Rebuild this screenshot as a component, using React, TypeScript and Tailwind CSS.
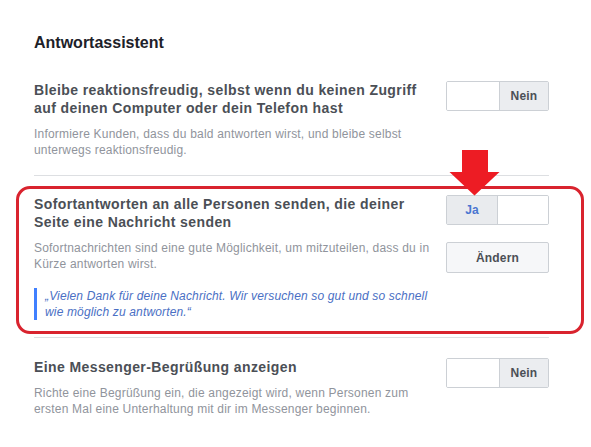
import React from "react";

const font = { fontFamily: '"Liberation Sans", Arial, Helvetica, sans-serif' };

function Toggle({ on }: { on: boolean }) {
  return (
    <div className="flex h-[30px] w-[103px] rounded-[2px] border border-[#ccd0d5] bg-white overflow-hidden">
      {on ? (
        <>
          <div className="flex w-[50px] items-center justify-center bg-[#e9ebee] text-[12px] font-bold text-[#4a76d1] tracking-[0.2px]">
            Ja
          </div>
          <div className="flex-1 border-l border-[#ccd0d5] bg-white" />
        </>
      ) : (
        <>
          <div className="w-[52px] bg-white" />
          <div className="flex flex-1 items-center justify-center border-l border-[#ccd0d5] bg-[#ebedf0] text-[12px] font-bold text-[#4b4f56] tracking-[0.2px]">
            Nein
          </div>
        </>
      )}
    </div>
  );
}

function Heading({ children }: { children: React.ReactNode }) {
  return (
    <div className="text-[14px] font-bold leading-[18px] tracking-[0.4px] text-[#4b4f56]">
      {children}
    </div>
  );
}

function Desc({ children }: { children: React.ReactNode }) {
  return (
    <div className="mt-[9px] text-[12px] leading-[16px] tracking-[0.2px] text-[#90949c]">
      {children}
    </div>
  );
}

export default function App() {
  return (
    <div className="relative h-[447px] w-[591px] overflow-hidden bg-white" style={font}>
      <div className="ml-[34px] w-[515px] pt-[33px]">
        <div className="text-[16px] font-bold leading-[20px] text-[#1d2129]">
          Antwortassistent
        </div>

        {/* Section 1 */}
        <div className="mt-[28px] flex items-start justify-between border-b border-[#dddfe2] pb-[17px]">
          <div className="w-[400px]">
            <Heading>
              Bleibe reaktionsfreudig, selbst wenn du keinen Zugriff
              <br />
              auf deinen Computer oder dein Telefon hast
            </Heading>
            <Desc>
              Informiere Kunden, dass du bald antworten wirst, und bleibe selbst
              <br />
              unterwegs reaktionsfreudig.
            </Desc>
          </div>
          <div className="w-[103px]">
            <Toggle on={false} />
          </div>
        </div>

        {/* Section 2 */}
        <div className="flex items-start justify-between border-b border-[#dddfe2] pt-[19px] pb-[17px]">
          <div className="w-[400px]">
            <Heading>
              Sofortantworten an alle Personen senden, die deiner
              <br />
              Seite eine Nachricht senden
            </Heading>
            <Desc>
              Sofortnachrichten sind eine gute Möglichkeit, um mitzuteilen, dass du in
              <br />
              Kürze antworten wirst.
            </Desc>
            <div className="mt-[16px] border-l-[3px] border-[#4080ff] pl-[8px] text-[12px] italic leading-[16px] tracking-[0.15px] text-[#4a6fc4]">
              „Vielen Dank für deine Nachricht. Wir versuchen so gut und so schnell
              <br />
              wie möglich zu antworten.“
            </div>
          </div>
          <div className="flex w-[103px] flex-col">
            <Toggle on={true} />
            <button className="mt-[17px] flex h-[31px] w-[103px] items-center justify-center rounded-[2px] border border-[#ccd0d5] bg-[#f6f7f9] text-[12px] font-bold tracking-[0.2px] text-[#4b4f56]">
              Ändern
            </button>
          </div>
        </div>

        {/* Section 3 */}
        <div className="flex items-start justify-between pt-[20px]">
          <div className="w-[400px]">
            <Heading>Eine Messenger-Begrüßung anzeigen</Heading>
            <Desc>
              Richte eine Begrüßung ein, die angezeigt wird, wenn Personen zum
              <br />
              ersten Mal eine Unterhaltung mit dir im Messenger beginnen.
            </Desc>
          </div>
          <div className="w-[103px]">
            <Toggle on={false} />
          </div>
        </div>
      </div>

      {/* Red annotation box */}
      <div className="pointer-events-none absolute left-[16px] top-[186px] h-[148px] w-[568px] rounded-[14px] border-[3px] border-[#d9232e]" />

      {/* Red arrow */}
      <svg
        className="pointer-events-none absolute left-[449px] top-[150px]"
        width="51"
        height="46"
        viewBox="0 0 51 46"
      >
        <polygon points="13,0 39,0 39,22 50.5,22 25.5,45.5 0.5,22 13,22" fill="#ed1c24" />
      </svg>
    </div>
  );
}
